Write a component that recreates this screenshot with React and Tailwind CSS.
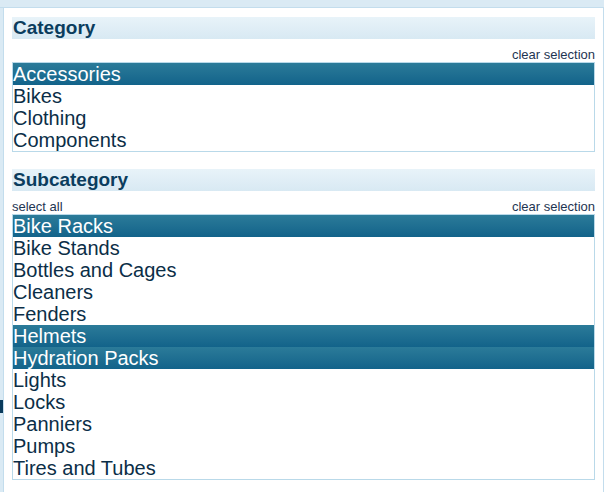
import React from "react";

const categories = [
  { name: "Accessories", sel: true },
  { name: "Bikes" },
  { name: "Clothing" },
  { name: "Components" },
];

const subcategories = [
  { name: "Bike Racks", sel: true },
  { name: "Bike Stands" },
  { name: "Bottles and Cages" },
  { name: "Cleaners" },
  { name: "Fenders" },
  { name: "Helmets", sel: true },
  { name: "Hydration Packs", sel: true },
  { name: "Lights" },
  { name: "Locks" },
  { name: "Panniers" },
  { name: "Pumps" },
  { name: "Tires and Tubes" },
];

function Header({ title }) {
  return (
    <div className="h-[22px] bg-gradient-to-b from-[#e8f3f9] to-[#d8e9f3] pl-[1px] text-[19px] font-bold leading-[22px] text-[#0b3d5e]">
      {title}
    </div>
  );
}

function List({ items }) {
  return (
    <div className="border border-[#b9d9e9]">
      {items.map((it) => (
        <div
          key={it.name}
          className={
            it.sel
              ? "h-[22px] bg-gradient-to-b from-[#2b7b99] to-[#12638a] text-[20px] leading-[22px] text-white"
              : "h-[22px] text-[20px] leading-[22px] text-[#0b2e47]"
          }
        >
          {it.name}
        </div>
      ))}
    </div>
  );
}

export default function App() {
  return (
    <div
      className="w-[610px] h-[492px] bg-white flex flex-col overflow-hidden"
      style={{ fontFamily: '"Liberation Sans", Arial, sans-serif' }}
    >
      <div className="w-[604px] h-[8px] shrink-0 bg-[#daeaf4] border-b border-[#c3dded]" />
      <div className="flex flex-1 w-[604px]">
        <div className="relative w-[3px] bg-[#daeaf4]">
          <div className="absolute left-0 top-[392px] w-[3px] h-[13px] bg-[#0a3b5c]" />
        </div>
        <div className="flex-1 border-l border-r border-[#c3dded] px-[8px] pt-[9px]">
          <Header title="Category" />
          <div className="h-[23px] flex items-end justify-end text-[13px] leading-[15px] text-[#1e3552]">
            <span>clear selection</span>
          </div>
          <List items={categories} />

          <div className="mt-[17px]">
            <Header title="Subcategory" />
          </div>
          <div className="h-[23px] flex items-end justify-between text-[13px] leading-[15px] text-[#1e3552]">
            <span>select all</span>
            <span>clear selection</span>
          </div>
          <List items={subcategories} />
        </div>
      </div>
    </div>
  );
}
